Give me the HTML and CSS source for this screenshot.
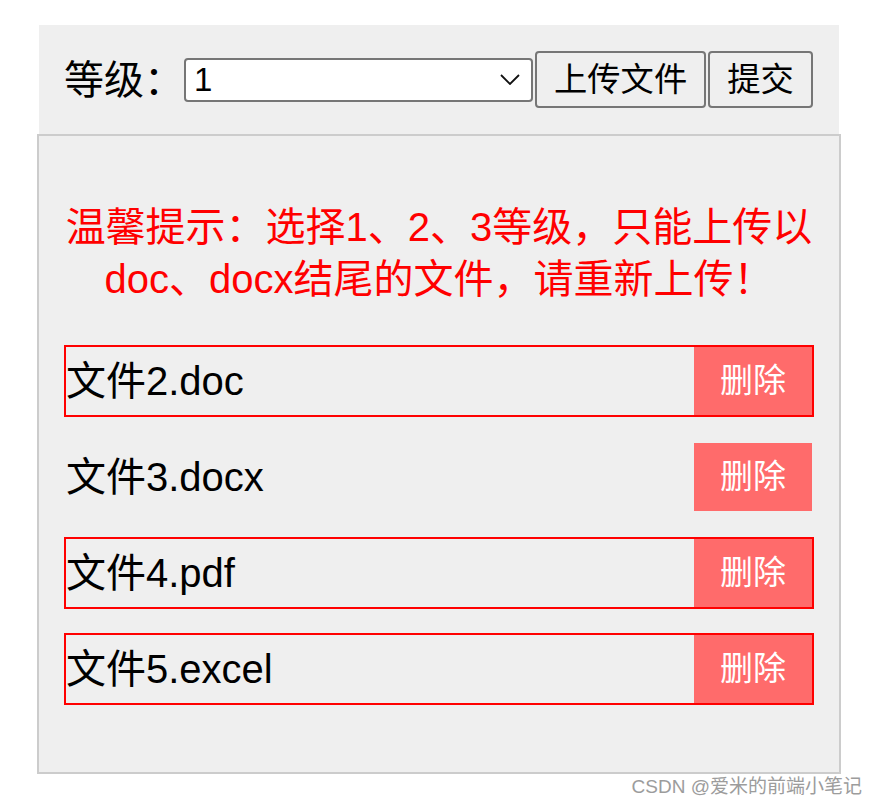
FILE: index.html
```html
<!DOCTYPE html>
<html lang="zh-CN">
<head>
<meta charset="utf-8">
<title>上传文件</title>
<link rel="stylesheet" href="styles.css">
</head>
<body>
<div class="page">
  <div class="toolbar">
    <span class="label">等级：</span>
    <span class="select-wrap">
      <select class="level">
        <option>1</option>
        <option>2</option>
        <option>3</option>
      </select>
      <svg class="chevron" width="20" height="11" viewBox="0 0 20 11"><path d="M1 1 L10 10 L19 1" fill="none" stroke="#111" stroke-width="1.8"/></svg>
    </span>
    <button class="btn">上传文件</button>
    <button class="btn">提交</button>
  </div>
  <div class="panel">
    <p class="tip">温馨提示：选择1、2、3等级，只能上传以doc、docx结尾的文件，请重新上传！</p>
    <ul class="files">
      <li class="file invalid"><span class="name">文件2.doc</span><button class="del">删除</button></li>
      <li class="file valid"><span class="name">文件3.docx</span><button class="del">删除</button></li>
      <li class="file invalid"><span class="name">文件4.pdf</span><button class="del">删除</button></li>
      <li class="file invalid"><span class="name">文件5.excel</span><button class="del">删除</button></li>
    </ul>
  </div>
</div>
<div class="watermark">CSDN @爱米的前端小笔记</div>
</body>
</html>
```

FILE: styles.css
```css
html, body {
  margin: 0;
  padding: 0;
  background: #fff;
}
body {
  font-family: "Liberation Sans", "Noto Sans CJK SC", sans-serif;
  color: #000;
}
.page {
  width: 800px;
  margin: 25px 0 0 39px;
}
.toolbar {
  height: 109px;
  box-sizing: border-box;
  background: #efefef;
  display: flex;
  align-items: center;
  padding-left: 25px;
}
.label {
  font-size: 40px;
  line-height: 48px;
  width: 120px;
  white-space: nowrap;
}
.select-wrap {
  position: relative;
  display: flex;
}
.level {
  -webkit-appearance: none;
  appearance: none;
  width: 349px;
  height: 44px;
  box-sizing: border-box;
  border: 2px solid #767676;
  border-radius: 4px;
  background: #fff;
  color: #000;
  font-family: inherit;
  font-size: 33px;
  padding: 0 8px;
  margin: 0;
  outline: none;
}
.chevron {
  position: absolute;
  left: 316px;
  top: 16px;
  pointer-events: none;
}
.btn {
  height: 57px;
  box-sizing: border-box;
  margin: 0 0 0 2px;
  padding: 0 17px;
  border: 2px solid #767676;
  border-radius: 4px;
  background: #efefef;
  color: #000;
  font-family: inherit;
  font-size: 33.3px;
  line-height: 44px;
}
.panel {
  margin: 0 -2px;
  border: 2px solid #ccc;
  background: #efefef;
  padding: 25px 25px 67px;
}
.tip {
  margin: 40px 0;
  color: #f00;
  font-size: 40px;
  line-height: 52px;
  text-align: center;
}
.files {
  list-style: none;
  margin: 0;
  padding: 0;
  display: flex;
  flex-direction: column;
  gap: 24px;
}
.file {
  height: 72px;
  box-sizing: border-box;
  border: 2px solid #f00;
  display: flex;
  justify-content: space-between;
  align-items: stretch;
}
.file.valid {
  border-color: transparent;
}
.name {
  font-size: 40px;
  line-height: 68px;
  white-space: nowrap;
}
.del {
  width: 118px;
  margin: 0;
  padding: 0;
  border: 0;
  background: #ff6b6b;
  color: #fff;
  font-family: inherit;
  font-size: 33px;
  line-height: 68px;
}
.watermark {
  position: absolute;
  right: 16px;
  top: 775px;
  font-size: 19px;
  line-height: 24px;
  color: #9c9c9c;
  white-space: nowrap;
}
```
